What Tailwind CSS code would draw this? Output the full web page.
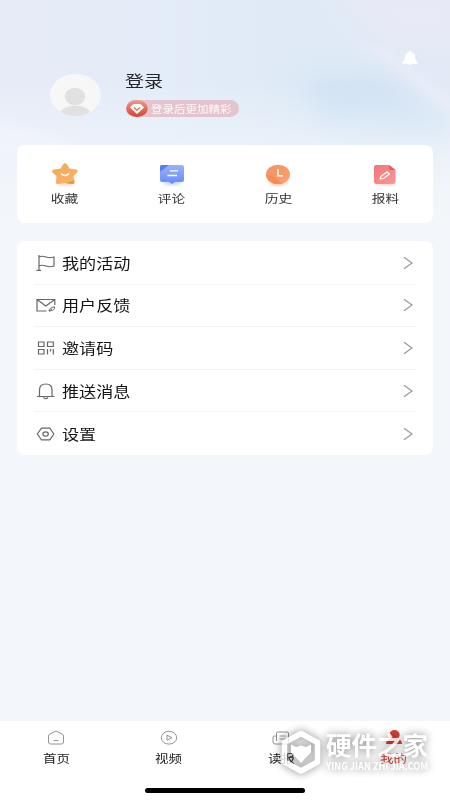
<!DOCTYPE html>
<html lang="zh-CN">
<head>
<meta charset="utf-8">
<meta name="viewport" content="width=device-width, initial-scale=1">
<title>我的</title>
<script src="https://cdn.jsdelivr.net/npm/@tailwindcss/browser@4"></script>
</head>
<body class="bg-[#f3f7fb] font-['Noto_Sans_CJK_SC',sans-serif] text-[#222]">
<div class="relative flex h-[800px] w-[450px] flex-col overflow-hidden">
  <!-- sky backdrop -->
  <svg class="absolute inset-0 -z-10" width="450" height="240" viewBox="0 0 450 240">
    <defs>
      <linearGradient id="sky" x1="0" y1="0" x2="1" y2="0"><stop offset="0" stop-color="#e7ebf7"/><stop offset=".35" stop-color="#e3ecf8"/><stop offset=".65" stop-color="#dfeaf6"/><stop offset="1" stop-color="#e2eaf6"/></linearGradient>
      <linearGradient id="fade" x1="0" y1="0" x2="0" y2="1"><stop offset=".35" stop-color="#f3f7fb" stop-opacity="0"/><stop offset=".78" stop-color="#f3f7fb" stop-opacity=".9"/><stop offset="1" stop-color="#f3f7fb"/></linearGradient>
      <filter id="soft" x="-50%" y="-50%" width="200%" height="200%"><feGaussianBlur stdDeviation="14"/></filter>
      <filter id="soft2" x="-50%" y="-50%" width="200%" height="200%"><feGaussianBlur stdDeviation="5"/></filter>
    </defs>
    <rect width="450" height="240" fill="url(#sky)"/>
    <path d="M320 -10H460V50L390 40Z" fill="#e8eaf6" filter="url(#soft)"/>
    <path d="M300 80L380 75L450 120V150L320 130Z" fill="#cfe1f4" filter="url(#soft)"/>
    <path d="M-10 120L80 142L-10 160Z" fill="#edf1fa" filter="url(#soft2)"/>
    <path d="M355 38L385 48L452 100V112Z" fill="#e9edf8" filter="url(#soft2)"/>
    <rect width="450" height="240" fill="url(#fade)"/>
  </svg>

  <header class="flex h-[145px] pt-[50px]">
    <svg class="mt-6 ml-[50px] shrink-0" width="51" height="42" viewBox="0 0 51 42">
      <clipPath id="av"><ellipse cx="25.5" cy="21" rx="25.5" ry="21"/></clipPath>
      <g clip-path="url(#av)"><rect width="51" height="42" fill="#f7f7f8"/><ellipse cx="25" cy="22.500" rx="10.200" ry="8.700" fill="#e1e1e2"/><ellipse cx="25.300" cy="40.500" rx="15.500" ry="9" fill="#e1e1e2"/></g>
    </svg>
    <div class="ml-6 flex flex-col pt-[18px]">
      <div class="h-[26px] origin-left scale-x-[1.19] text-[16px] leading-6 whitespace-nowrap text-[#25272c]">登录</div>
      <div class="mt-[6px] ml-[1px] flex h-[17px] w-[113px] items-center rounded-full bg-[#e5c5cd]">
        <svg width="23" height="17" viewBox="0 0 23 17" class="shrink-0"><defs><linearGradient id="gem" x1="0" y1="0" x2="0" y2="1"><stop stop-color="#eb9c91"/><stop offset="1" stop-color="#d54330"/></linearGradient></defs><ellipse cx="11" cy="8.500" rx="10.800" ry="8.500" fill="url(#gem)"/><path d="M7.500 4H14.500L18 7.500L11 14L4 7.500Z" fill="#fff"/><path d="M8 7.500L11 10.200L14 7.500" fill="none" stroke="#dc6252" stroke-width="1.200"/></svg>
        <span class="ml-[2px] origin-left scale-x-[1.15] text-[10px] leading-[17px] whitespace-nowrap text-white/90">登录后更加精彩</span>
      </div>
    </div>
    <svg class="mt-[1px] mr-8 ml-auto" width="16" height="15" viewBox="0 0 16 15"><path d="M7 0H9V1Q13 2 13 6Q13 9.500 15.500 11V12.800H10Q8 15.500 6 12.800H.500V11Q3 9.500 3 6Q3 2 7 1Z" fill="#fff"/></svg>
  </header>

  <section class="mx-[17px] h-[78px] shrink-0 rounded-[8px] bg-white pt-[16px] text-[11.500px] text-[#333]">
    <div class="-mx-[6px] grid grid-cols-4">
      <div class="flex flex-col items-center">
        <svg width="32" height="26" viewBox="0 0 32 26"><defs><linearGradient id="st" x1="0" y1="0" x2="1" y2="1"><stop stop-color="#f3a660"/><stop offset="1" stop-color="#fab364"/></linearGradient><filter id="gl" x="-40%" y="-80%" width="180%" height="260%"><feGaussianBlur stdDeviation="1.500"/></filter></defs><ellipse cx="16" cy="22.500" rx="9" ry="2" fill="#fcdcc0" filter="url(#gl)"/><path d="M14 3.500Q16 1 18 3.500L20.500 7.500L27 8.500Q30 9.500 28 11.500L24.500 15L25.500 21Q25.500 23.500 23 23L16 22L9 23Q6.500 23.500 7 21L7.500 15L3.500 11.500Q2 9.500 5 8.500L11.500 7.500Z" fill="url(#st)"/><path d="M25 19L25.500 21Q25.500 23.500 23 23L17 22.200Z" fill="#f59538"/><path d="M12 12.500Q16 16.500 20 12.500" fill="none" stroke="#fff" stroke-width="1.300"/></svg>
        <span class="scale-x-[1.19] leading-[22px]">收藏</span>
      </div>
      <div class="flex flex-col items-center">
        <svg width="32" height="26" viewBox="0 0 32 26"><defs><linearGradient id="bl" x1="0" y1="0" x2="0" y2="1"><stop stop-color="#9ab2fd"/><stop offset="1" stop-color="#668bf7"/></linearGradient></defs><ellipse cx="16" cy="22" rx="9" ry="2" fill="#c4d1ff" filter="url(#gl)"/><path d="M6 4H26Q28 4 28 6V19Q28 21 26 21H19L16 23L13 21H6Q4 21 4 19V6Q4 4 6 4Z" fill="url(#bl)"/><path d="M6 4H13L4 11V6Q4 4 6 4Z" fill="#577cec"/><path d="M14 9.800H22M11.500 14.500H21" stroke="#fff" stroke-width="1.300"/></svg>
        <span class="scale-x-[1.19] leading-[22px]">评论</span>
      </div>
      <div class="flex flex-col items-center">
        <svg class="mr-[1px]" width="32" height="26" viewBox="0 0 32 26"><defs><linearGradient id="cl" x1="0" y1="0" x2="1" y2="1"><stop stop-color="#f4915f"/><stop offset="1" stop-color="#ffa16f"/></linearGradient></defs><ellipse cx="16" cy="22.500" rx="9" ry="2" fill="#ffd0bc" filter="url(#gl)"/><ellipse cx="16" cy="13.500" rx="12" ry="9.800" fill="url(#cl)"/><path d="M4 14Q13 14 20 22.600Q8 25 4.500 16Z" fill="#f98451" opacity=".65"/><path d="M16 8V14.800H21" fill="none" stroke="#fff" stroke-width="1.500"/></svg>
        <span class="scale-x-[1.19] leading-[22px]">历史</span>
      </div>
      <div class="flex flex-col items-center">
        <svg class="mr-[2px]" width="32" height="26" viewBox="0 0 32 26"><defs><linearGradient id="pn" x1="0" y1="0" x2="1" y2="1"><stop stop-color="#f17779"/><stop offset="1" stop-color="#fa9895"/></linearGradient></defs><ellipse cx="16" cy="22.500" rx="9" ry="2" fill="#ffd0d0" filter="url(#gl)"/><path d="M7 4H20L26.500 9V21Q26.500 23 24 23H7.500Q5 23 5 21V6Q5 4 7 4Z" fill="url(#pn)"/><path d="M20 4V7.500Q20 9 22 9H26.500Z" fill="#e75c62"/><path d="M11.200 18L11.800 15.500L18 11L20.500 13L14.500 17.500Z" fill="none" stroke="#fff" stroke-width="1.200" stroke-linejoin="round"/></svg>
        <span class="mr-[1px] scale-x-[1.19] leading-[22px]">报料</span>
      </div>
    </div>
  </section>

  <section class="mx-[17px] mt-[18px] flex h-[214px] shrink-0 flex-col rounded-[8px] bg-white pr-[17px] pl-[17px] text-[14.500px] text-[#151515]">
    <div class="flex h-[44px] items-center border-b border-[#f4f4f5]">
      <svg width="22" height="20" viewBox="0 0 22 20" fill="none" stroke="#666" stroke-width="1.200"><path d="M5 2V17M2.500 17.300H7M5 4Q8 2.500 12 4T20 4V13Q16 14.500 12 13T5 13"/></svg>
      <span class="ml-[6px] origin-left scale-x-[1.18]">我的活动</span>
      <svg class="mr-[2px] ml-auto" width="12" height="14" viewBox="0 0 12 14"><path d="M2 1.200L10 7L2 12.800" fill="none" stroke="#999" stroke-width="1.200"/></svg>
    </div>
    <div class="flex h-[42px] items-center border-b border-[#f4f4f5] pb-[1px]">
      <svg width="22" height="20" viewBox="0 0 22 20" fill="none" stroke="#666" stroke-width="1.200"><path d="M12.500 16H3V4.500H20.800V10M3 4.500L11.800 11L20.800 4.500"/><path d="M15 16Q15 12.800 20.500 11.800Q21 15.300 16.500 15.800ZM15 16.300L18 13.800" stroke-width="1"/></svg>
      <span class="ml-[6px] origin-left scale-x-[1.18]">用户反馈</span>
      <svg class="mr-[2px] ml-auto" width="12" height="14" viewBox="0 0 12 14"><path d="M2 1.200L10 7L2 12.800" fill="none" stroke="#999" stroke-width="1.200"/></svg>
    </div>
    <div class="flex h-[43px] items-center border-b border-[#f4f4f5]">
      <svg width="22" height="20" viewBox="0 0 22 20" fill="none" stroke="#666" stroke-width="1.200"><path d="M4.500 4H10V8.500H4.500ZM13.500 4H19.300V8.500H13.500ZM4.500 11.500H10V16H4.500ZM13.500 11V16.500M16.500 11V13.500M19.300 11V16.500"/></svg>
      <span class="ml-[6px] origin-left scale-x-[1.18]">邀请码</span>
      <svg class="mr-[2px] ml-auto" width="12" height="14" viewBox="0 0 12 14"><path d="M2 1.200L10 7L2 12.800" fill="none" stroke="#999" stroke-width="1.200"/></svg>
    </div>
    <div class="flex h-[42px] items-center border-b border-[#f4f4f5]">
      <svg width="22" height="20" viewBox="0 0 22 20" fill="none" stroke="#666" stroke-width="1.200"><path d="M3 15.500H20.500M5.500 15.500V9Q5.500 3 11.800 3T18 9V15.500M9.500 16.500Q11.800 19 14 16.500"/></svg>
      <span class="ml-[6px] origin-left scale-x-[1.18]">推送消息</span>
      <svg class="mr-[2px] ml-auto" width="12" height="14" viewBox="0 0 12 14"><path d="M2 1.200L10 7L2 12.800" fill="none" stroke="#999" stroke-width="1.200"/></svg>
    </div>
    <div class="flex h-[43px] items-center pt-[1px]">
      <svg width="22" height="20" viewBox="0 0 22 20" fill="none" stroke="#666" stroke-width="1.200"><path d="M7.500 4.200H15.800L19.800 10L15.800 15.800H7.500L3.300 10Z" stroke-linejoin="round"/><ellipse cx="11.600" cy="10" rx="2.700" ry="2.100"/></svg>
      <span class="ml-[6px] origin-left scale-x-[1.18]">设置</span>
      <svg class="mr-[2px] ml-auto" width="12" height="14" viewBox="0 0 12 14"><path d="M2 1.200L10 7L2 12.800" fill="none" stroke="#999" stroke-width="1.200"/></svg>
    </div>
  </section>

  <footer class="mt-auto h-[79px] shrink-0 bg-white">
    <nav class="grid h-[66px] grid-cols-4 pt-[7px] text-[11.500px] text-[#222]">
      <div class="flex flex-col items-center">
        <svg width="20" height="20" viewBox="0 0 20 20" fill="none" stroke="#888" stroke-width=".9"><path d="M2.500 8Q2.500 6.500 4 6L9 3.500Q10 3 11 3.500L16 6Q17.500 6.500 17.500 8V14Q17.500 16 15.500 16H4.500Q2.500 16 2.500 14ZM7.500 12.500H12.500"/></svg>
        <span class="scale-x-[1.17] leading-[21px]">首页</span>
      </div>
      <div class="flex flex-col items-center">
        <svg width="20" height="20" viewBox="0 0 20 20" fill="none" stroke="#888" stroke-width=".9"><ellipse cx="10" cy="9.700" rx="7.700" ry="6.400"/><path d="M8 7.200L13 9.700L8 12.200Z"/></svg>
        <span class="scale-x-[1.17] leading-[21px]">视频</span>
      </div>
      <div class="flex flex-col items-center">
        <svg width="20" height="20" viewBox="0 0 20 20" fill="none" stroke="#888" stroke-width=".9"><path d="M5.500 13V5Q5.500 4 7 4H16Q17.500 4 17.500 5V14Q17.500 16 15.500 16H4Q2 16 2 14V9Q2 8 3.500 8H5.500M8.500 8H14.500M8.500 11H14.500"/></svg>
        <span class="scale-x-[1.17] leading-[21px]">读报</span>
      </div>
      <div class="flex flex-col items-center text-[#d23c2f]">
        <svg width="20" height="20" viewBox="0 0 20 20" fill="#d64236"><ellipse cx="10.500" cy="6.700" rx="5.200" ry="4.600"/><path d="M2 16Q2 11 8 11H12Q18 11 18 16Z"/></svg>
        <span class="scale-x-[1.17] leading-[21px]">我的</span>
      </div>
    </nav>
    <div class="mx-auto mt-[1px] h-[5px] w-[160px] rounded-full bg-black"></div>
  </footer>

  <!-- translucent site mark over the tab bar -->
  <div class="absolute top-[730px] left-[281px] flex text-white opacity-80 drop-shadow-[0_0_4px_rgba(0,0,0,0.6)]">
    <svg width="40" height="44" viewBox="0 0 40 44"><path d="M20 3.500L36.500 12.500V32L20 41L3.500 32V12.500Z" fill="none" stroke="#fff" stroke-width="5.500" stroke-linejoin="round"/><path d="M10 14.500L15 17L20 15.500L25 17L30 14.500V22.500L20 33L10 22.500Z" fill="#fff"/></svg>
    <div class="ml-[5px] flex flex-col whitespace-nowrap">
      <span class="h-[30px] text-[25.500px] leading-[28px] font-bold">硬件之家</span>
      <span class="w-0 origin-left scale-x-[.89] text-[10.300px] leading-[12px] font-bold">YING JIAN ZHI JIA.COM</span>
    </div>
  </div>
</div>
</body>
</html>
